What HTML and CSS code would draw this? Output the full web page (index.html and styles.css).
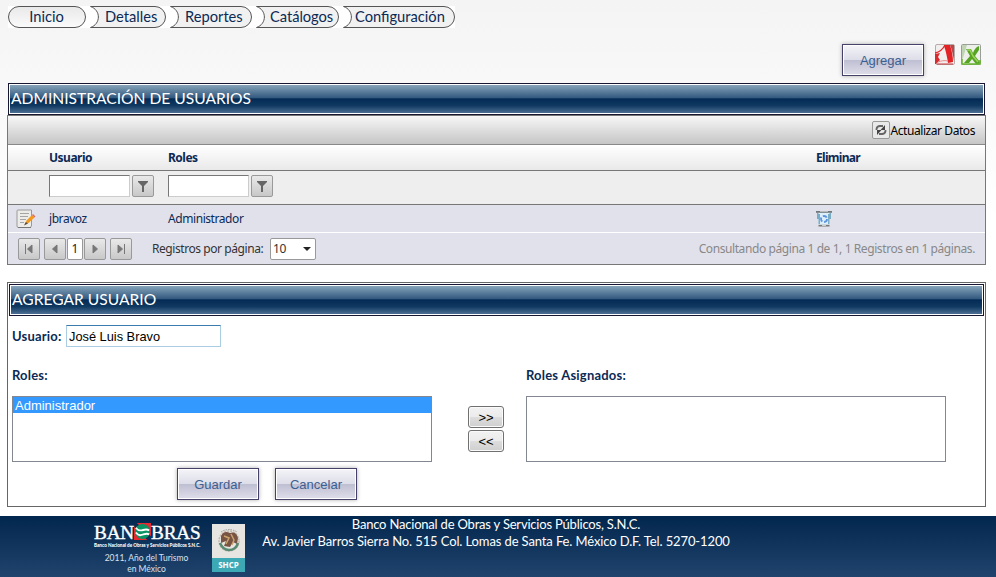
FILE: index.html
```html
<!DOCTYPE html>
<html lang="es">
<head>
<meta charset="utf-8">
<title>Administración de usuarios</title>
<link rel="stylesheet" href="styles.css">
</head>
<body>
<nav class="nav">
  <a class="first">Inicio</a>
  <a class="step w1"><span>Detalles</span><svg viewBox="0 0 76 22"><path d="M.5 .5H65A10.5 10.5 0 0 1 65 21.5H.5C11 18 11 4 .5 .5Z"/></svg></a>
  <a class="step w2"><span>Reportes</span><svg viewBox="0 0 82 22"><path d="M.5 .5H71A10.5 10.5 0 0 1 71 21.5H.5C11 18 11 4 .5 .5Z"/></svg></a>
  <a class="step w3"><span>Catálogos</span><svg viewBox="0 0 83 22"><path d="M.5 .5H72A10.5 10.5 0 0 1 72 21.5H.5C11 18 11 4 .5 .5Z"/></svg></a>
  <a class="step w4"><span>Configuración</span><svg viewBox="0 0 112 22"><path d="M.5 .5H101A10.5 10.5 0 0 1 101 21.5H.5C11 18 11 4 .5 .5Z"/></svg></a>
</nav>
<div class="actions">
  <button class="btn">Agregar</button>
  <svg class="pdf" width="20" height="21" viewBox="0 0 20 21"><rect x=".5" y=".5" width="19" height="20" rx="1.500" fill="#f3eeee" stroke="#b5acac"/><path d="M10 1H15C17 7 18 13 18 18L13 19C12 13 11 7 9 2Z" fill="#e32226"/><path d="M15 1H19V17C18 11 17 6 15 1Z" fill="#b9474a"/><path d="M0 9C5 8 8 5 10 1" fill="none" stroke="#e32226" stroke-width="1.300"/><path d="M0 10L5 9L3 13L5 16L1 20H0Z" fill="#d92b2f"/><path d="M3 18C6 17 9 16 13 17" fill="none" stroke="#e8898b"/><path d="M2 20H18" stroke="#c9383b"/></svg>
  <svg class="xls" width="20" height="21" viewBox="0 0 20 21"><rect x=".5" y=".5" width="19" height="20" rx="1" fill="#edf0ea" stroke="#9a9d98"/><path d="M1 1H6L1 17Z" fill="#c1d3b5"/><path d="M5 5H10L12 9C13 6 15 3 18 2V6L14 12L19 18V20H15L11 15L8 19H3L9 12Z" fill="#57a324"/><path d="M6 6H9L12 12L17 18" stroke="#9ad45c" fill="none" stroke-width="1.500"/><path d="M1 15V20H19V16" fill="none" stroke="#68b62e" stroke-width="1.500"/></svg>
</div>
<section class="grid-wrap">
  <h1 class="title"><span>ADMINISTRACIÓN DE USUARIOS</span></h1>
  <div class="grid">
    <div class="toolbar"><span class="refresh"><svg width="16" height="16" viewBox="0 0 16 16"><path d="M3.500 8V7Q4 4 7 4H10M12.500 8V9Q12 12 9 12H6" fill="none" stroke="#666" stroke-width="1.800"/><path d="M12 3V8H7.500ZM4 13V8H8.500Z" fill="#444"/></svg></span><span>Actualizar Datos</span></div>
    <div class="row head"><span></span><b>Usuario</b><b>Roles</b><b class="elim">Eliminar</b></div>
    <div class="row filter"><span></span>
      <div class="f"><input><span class="sq"><svg width="12" height="12" viewBox="0 0 12 12"><path d="M1 1H11V2L7 6V12H5V6L1 2Z" fill="#666"/></svg></span></div>
      <div class="f"><input><span class="sq"><svg width="12" height="12" viewBox="0 0 12 12"><path d="M1 1H11V2L7 6V12H5V6L1 2Z" fill="#666"/></svg></span></div><span></span></div>
    <div class="row data">
      <svg class="edit" width="20" height="20" viewBox="0 0 20 20"><path d="M1 2Q1 1 2 1H15.500V17L14 18.500H2.500Q1 18.500 1 17Z" fill="#ecece8" stroke="#999"/><path d="M2 18.500H15" stroke="#777"/><path d="M4 4.500H13M4 7.500H12M4 10.500H10M4 13.500H8" stroke="#a5a5a5"/><path d="M9 15.500L10.500 11.500L16 6L18.500 8.500L12.500 14Z" fill="#f39a1e"/><path d="M16 6L17 5L19.500 7.500L18.500 8.500Z" fill="#d76d62"/><path d="M8 16.500L9.800 13L12 14.500Z" fill="#5d4b36"/></svg>
      <span>jbravoz</span><span>Administrador</span>
      <svg width="16" height="17" viewBox="0 0 16 17"><path d="M1.500 2H14.500L13 16H3Z" fill="#dceefa"/><path d="M1.800 3V9M14.200 3V9M3.200 4V14M12.800 4V14" stroke="#5f9db8" stroke-width="1.200"/><path d="M0 1H16V2.800H0Z" fill="#70777b"/><path d="M4 1H12V2H4Z" fill="#bbb"/><path d="M2.500 14.800H13.500V16.500H2.500Z" fill="#777"/><path d="M6 15H10V16H6Z" fill="#ccc"/><circle cx="8" cy="9" r="3" fill="none" stroke="#5b93de" stroke-width="1.800" stroke-dasharray="4.500 1.780"/></svg>
    </div>
    <div class="pager">
      <span class="sq"><svg width="12" height="10" viewBox="0 0 12 10"><path d="M2.500 0V10M4.500 5L9 1V9Z"/></svg></span>
      <span class="sq prev"><svg width="12" height="10" viewBox="0 0 12 10"><path d="M3.500 5L8 1V9Z"/></svg></span>
      <span class="cur">1</span>
      <span class="sq"><svg width="12" height="10" viewBox="0 0 12 10"><path d="M8.500 5L4 1V9Z"/></svg></span>
      <span class="sq last"><svg width="12" height="10" viewBox="0 0 12 10"><path d="M9.500 0V10M7.500 5L3 1V9Z"/></svg></span>
      <span class="per">Registros por página:</span>
      <span class="sel">10<i></i></span>
      <span class="info">Consultando página 1 de 1, 1 Registros en 1 páginas.</span>
    </div>
  </div>
</section>
<section class="form">
  <h2 class="title"><span>AGREGAR USUARIO</span></h2>
  <div class="user"><label class="lu">Usuario:</label><input value="José Luis Bravo"></div>
  <div class="lists">
    <div class="col"><label>Roles:</label><div class="list"><div class="opt">Administrador</div></div></div>
    <div class="move"><button>&gt;&gt;</button><button>&lt;&lt;</button></div>
    <div class="col"><label>Roles Asignados:</label><div class="list"></div></div>
  </div>
  <div class="buttons"><button class="btn">Guardar</button><button class="btn">Cancelar</button></div>
</section>
<footer>
  <div class="brand">
    <div class="logo"><span>BAN</span><svg width="17" height="17" viewBox="0 0 18 18"><path d="M3 0H18V14Z" fill="#e52a32"/><path d="M0 4V18H14Z" fill="#e52a32"/><circle cx="9" cy="9" r="8" fill="#0a9363"/><path d="M2 5C7 12 11 4 16 8M2 10C7 17 11 9 16 12" fill="none" stroke="#fff" stroke-width="2"/></svg><span>BRAS</span></div>
    <div class="sub">Banco Nacional de Obras y Servicios Públicos S.N.C.</div>
    <div class="year">2011, Año del Turismo<br>en México</div>
  </div>
  <div class="shcp"><svg width="33" height="34" viewBox="0 0 33 34"><circle cx="17" cy="17" r="10" fill="none" stroke="#c2b8ac" stroke-width="1.500" stroke-dasharray="2 1"/><path d="M9 12Q12 6 18 9Q24 7 26 14L25 20L21 18L18 23L12 22L14 17L9 19Z" fill="#795344"/><path d="M12 12L17 14L14 20M19 10L22 16L20 21" fill="none" stroke="#c7a56c" stroke-width="1.500"/><path d="M8 19Q11 26 17 26Q24 26 26 19" fill="none" stroke="#578a70" stroke-width="2.500"/><path d="M9 8Q17 3 25 8" fill="none" stroke="#999" stroke-dasharray="1.500 1"/></svg><span>SHCP</span></div>
  <div class="addr"><div class="a1">Banco Nacional de Obras y Servicios Públicos, S.N.C.</div><div class="a2">Av. Javier Barros Sierra No. 515 Col. Lomas de Santa Fe. México D.F. Tel. 5270-1200</div></div>
</footer>
</body>
</html>
```
FILE: styles.css
```css
* { box-sizing: border-box; }
body { margin: 0; width: 996px; height: 577px; overflow: hidden; display: flex; flex-direction: column; font-family: Lato, sans-serif; color: #0b2a55; background: linear-gradient(#f4f4f4, #fff 220px); }
svg { display: block; flex: none; }
button, input { font-family: "Liberation Sans", sans-serif; margin: 0; }
.nav { display: flex; height: 22px; margin: 6px 0 0 8px; width: 447px; background: #fff; font-size: 14.700px; flex: none; }
.nav a { height: 22px; line-height: 20px; }
.first { width: 78px; border: 1px solid #555; border-radius: 11px; text-align: center; background: linear-gradient(#e9e9e9, #fafafa); }
.nav .first { line-height: 18px; padding-right: 1px; }
.step { display: grid; margin-left: 4px; }
.step > * { grid-area: 1 / 1; }
.step span { z-index: 1; padding-left: 15px; white-space: nowrap; }
.step path { fill: #f1f1f1; stroke: #555; }
.w1, .w1 svg { width: 76px; }
.w2, .w2 svg { width: 82px; }
.w3, .w3 svg { width: 83px; }
.w4, .w4 svg { width: 112px; }
.w3 span { padding-left: 14px; letter-spacing: -.05px; }
.w4 span { padding-left: 12px; }
.step svg { height: 22px; }
.actions { height: 55px; padding: 15px 15px 0 0; display: flex; justify-content: flex-end; align-items: flex-start; flex: none; }
.actions .btn { margin-top: 1px; }
.pdf { margin: 1px 6px 0 11px; }
.xls { margin-top: 1px; }
.btn { width: 82px; height: 32px; padding: 2px 0 0; border: 1px solid #454169; box-shadow: inset 0 0 0 1px #fff, 0 0 4px #aaa; background: linear-gradient(#f4f4f8, #dddde9 50%, #bfbfd3 51%, #dedeea); color: #3c5f91; font-size: 13px; line-height: 28px; }
.title { margin: 0; height: 32px; border: 1px solid #171733; box-shadow: inset 0 0 0 1px #fff; background: linear-gradient(#8caabe, #31577e 47%, #032a54 49%, #103961 72%, #53759a); color: #fff; font-weight: 400; font-size: 15.600px; line-height: 29px; padding-left: 2px; white-space: nowrap; }
.grid-wrap { margin: 0 10px 0 7px; width: 979px; flex: none; }
.grid-wrap .title { width: 977px; margin-left: 1px; }
.grid { border: 1px solid #777; height: 150px; font-family: "Noto Sans", sans-serif; font-size: 12px; letter-spacing: -.43px; }
.toolbar { height: 29px; border-bottom: 1px solid #888; background: linear-gradient(#f7f7f7, #c5c5c5); display: flex; justify-content: flex-end; align-items: center; padding-right: 10px; color: #000; white-space: nowrap; }
.refresh { width: 18px; height: 18px; border: 1px solid #999; border-radius: 2px; background: #e9e9e9; }
.row { display: grid; grid-template-columns: 41px 119px 648px 1fr; align-items: center; white-space: nowrap; }
.head { height: 26px; border-bottom: 1px solid #777; background: linear-gradient(#fff, #e9e9e9); letter-spacing: -.5px; }
.elim { letter-spacing: -.7px; }
.filter { height: 34px; border-bottom: 1px solid #777; background: #eee; padding-bottom: 3px; }
.f { display: flex; gap: 2px; }
.f input { width: 81px; height: 22px; border: 1px solid #bbb; border-color: #777 #ccc #ccc #777; padding: 0; background: #fff; }
.sq { width: 22px; height: 22px; border: 1px solid #999; border-radius: 2px; background: linear-gradient(#e9e9e9, #c8c8c8); display: flex; align-items: center; justify-content: center; flex: none; }
.data { height: 28px; border-bottom: 1px solid #fff; background: #e1e1eb; }
.edit { margin-left: 8px; }
.pager { height: 31px; background: #e1e1eb; display: flex; align-items: center; padding: 0 10px; color: #333; white-space: nowrap; }
.pager .sq path { fill: #777; stroke: #777; stroke-width: 1; }
.prev { margin-left: 4px; }
.last { margin-left: 4px; }
.cur { width: 16px; height: 22px; margin: 0 1px; border: 1px solid #999; border-radius: 2px; background: #fff; text-align: center; line-height: 20px; color: #222; letter-spacing: 0; }
.per { margin-left: 20px; width: 118px; }
.sel { width: 46px; height: 22px; border: 1px solid #999; border-radius: 2px; background: #fff; padding: 0 4px 0 2px; line-height: 21px; display: flex; justify-content: space-between; align-items: center; }
.sel i { border: 4px solid transparent; border-top-color: #222; border-bottom: 0; }
.info { margin-left: auto; color: #888; letter-spacing: -.41px; }
.form { margin: 17px 0 0 7px; width: 979px; height: 225px; border: 1px solid #666; background: #fff; flex: none; }
.form .title { margin: 1px 1px 0; width: 975px; }
.user { display: flex; align-items: center; padding: 9px 0 0 4px; height: 31px; }
.form label { font-weight: 700; font-size: 13px; letter-spacing: .2px; white-space: nowrap; }
.lu { width: 54px; }
.user input { width: 155px; height: 22px; border: 1px solid #abcde3; border-top-color: #3d7bad; padding: 1px 2px 0; font-size: 12.800px; color: #000; }
.lists { display: flex; padding: 21px 0 0 4px; height: 115px; }
.col { width: 420px; }
.col label { display: block; height: 28px; line-height: 14px; }
.list { width: 420px; height: 66px; border: 1px solid #828790; background: #fff; }
.opt { height: 16px; background: #39f; color: #fff; font: 13px/17px "Liberation Sans", sans-serif; padding-left: 2px; }
.move { width: 94px; padding: 38px 0 0 36px; display: flex; flex-direction: column; gap: 2px; }
.move button { width: 36px; height: 22px; padding: 0; border: 1px solid #707070; border-radius: 3px; box-shadow: inset 0 0 0 1px #fafafa; background: linear-gradient(#f2f2f2, #ebebeb 50%, #ddd 51%, #cfcfcf); font-size: 13px; color: #000; }
.buttons { display: flex; gap: 16px; padding: 6px 0 0 169px; }
footer { margin-top: 9px; height: 61px; background: linear-gradient(#02274e, #20436d); color: #fff; display: flex; flex: none; }
.brand { width: 108px; margin-left: 94px; padding-top: 7px; }
.logo { display: flex; height: 20px; font: 19.200px/20px "Liberation Serif", serif; align-items: flex-start; letter-spacing: -.15px; -webkit-text-stroke: .4px #fff; }
.sub { font-size: 4.600px; line-height: 5px; height: 7px; font-weight: 900; white-space: nowrap; }
.year { font-size: 8.500px; line-height: 11px; text-align: center; padding: 3px 3px 0 0; white-space: nowrap; color: #d9e2ed; }
.shcp { width: 33px; height: 48px; margin: 8px 0 0 10px; background: #e7e5e1; }
.shcp span { display: block; height: 14px; background: #3ca9b5; text-align: center; font: 700 8px/14px "Open Sans", sans-serif; }
.addr { width: 502px; text-align: center; font-size: 13px; line-height: 17px; white-space: nowrap; }
.a1 { letter-spacing: -.2px; }
.a2 { letter-spacing: -.12px; }
```
